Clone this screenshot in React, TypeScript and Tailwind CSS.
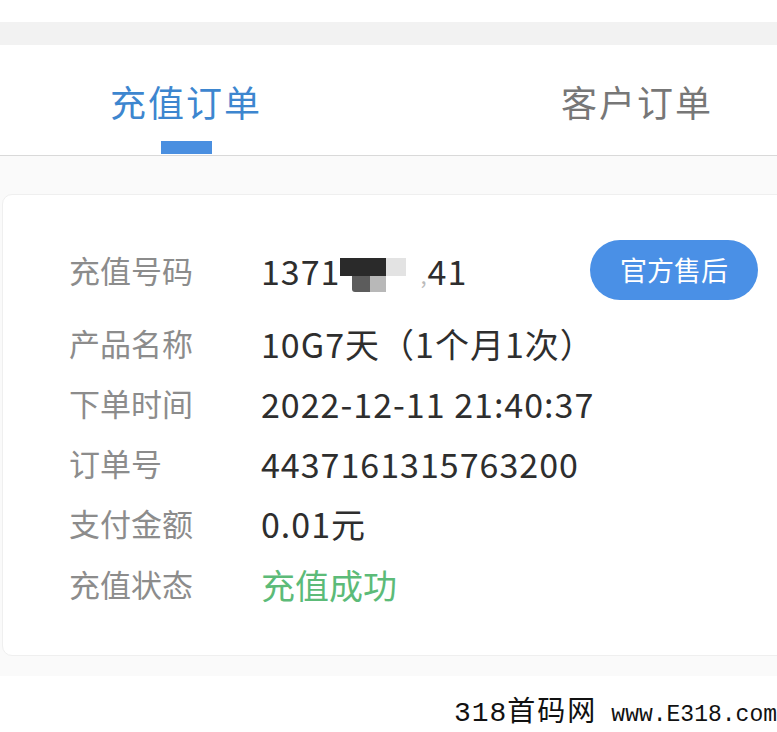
import React from "react"

const cjk = { fontFamily: '"Noto Sans CJK SC", "Noto Sans", sans-serif' }

const rows = [
  { label: "产品名称", value: "10G7天（1个月1次）" },
  { label: "下单时间", value: "2022-12-11 21:40:37" },
  { label: "订单号", value: "4437161315763200" },
  { label: "支付金额", value: "0.01元" },
]

function MaskedPhone() {
  return (
    <div className="flex items-center text-[34px] text-[#2e2e2e] tracking-[1px]">
      <span>1371</span>
      <div className="relative w-[80px] h-[44px]">
        <div className="absolute left-0 top-[10px] w-[46px] h-[18px] bg-[#2a2a2a]" />
        <div className="absolute left-[46px] top-[10px] w-[20px] h-[18px] bg-[#e3e3e3]" />
        <div className="absolute left-[12px] top-[28px] w-[18px] h-[16px] rounded-bl-[3px] bg-[#5c5c5c]" />
        <div className="absolute left-[30px] top-[28px] w-[16px] h-[16px] bg-[#b8b8b8]" />
      </div>
      <span className="text-[#bbb] text-[22px] mt-[8px]">,</span>
      <span>41</span>
    </div>
  )
}

export default function App() {
  return (
    <div className="w-[777px] h-[732px] bg-white overflow-hidden relative" style={cjk}>
      <div className="h-[22px] bg-white" />
      <div className="h-[23px] bg-[#f2f2f2]" />

      <div className="h-[111px] bg-white border-b border-[#d9d9d9] flex items-start">
        <div className="ml-[110px] flex flex-col items-center pt-[32px]">
          <span className="text-[36px] leading-[48px] text-[#3d86cf] tracking-[2px]">充值订单</span>
          <div className="mt-[16px] w-[51px] h-[13px] bg-[#4a8fe0]" />
        </div>
        <div className="ml-auto mr-[64px] pt-[32px]">
          <span className="text-[36px] leading-[48px] text-[#777] tracking-[2px]">客户订单</span>
        </div>
      </div>

      <div className="bg-[#fafafa] pt-[38px] pb-[20px] pl-[2px] -mr-[10px]">
        <div className="bg-white rounded-[10px] border border-[#efefef] h-[462px] pl-[66px] pr-[28px] pt-[44px]">
          <div className="flex items-center h-[62px]">
            <span className="w-[192px] text-[31px] text-[#8c8c8c]">充值号码</span>
            <MaskedPhone />
            <button className="ml-auto w-[168px] h-[60px] rounded-full bg-[#4a90e6] text-white text-[27px]">
              官方售后
            </button>
          </div>
          <div className="mt-[12px] flex flex-col">
            {rows.map((r) => (
              <div key={r.label} className="flex items-center h-[60px]">
                <span className="w-[192px] text-[31px] text-[#8c8c8c]">{r.label}</span>
                <span className="text-[34px] text-[#2e2e2e] tracking-[1px]">{r.value}</span>
              </div>
            ))}
            <div className="flex items-center h-[62px]">
              <span className="w-[192px] text-[31px] text-[#8c8c8c]">充值状态</span>
              <span className="text-[34px] text-[#5cbb78]">充值成功</span>
            </div>
          </div>
        </div>
      </div>

      <div className="absolute right-0 bottom-[-3px] flex items-baseline text-[#111]">
        <span style={{ fontFamily: '"Liberation Mono", monospace' }} className="text-[28px] tracking-[1px]">318</span>
        <span className="text-[28px] tracking-[2px]">首码网</span>
        <span style={{ fontFamily: '"Liberation Mono", monospace' }} className="text-[23px] ml-[14px]">
          www.E318.com
        </span>
      </div>
    </div>
  )
}
